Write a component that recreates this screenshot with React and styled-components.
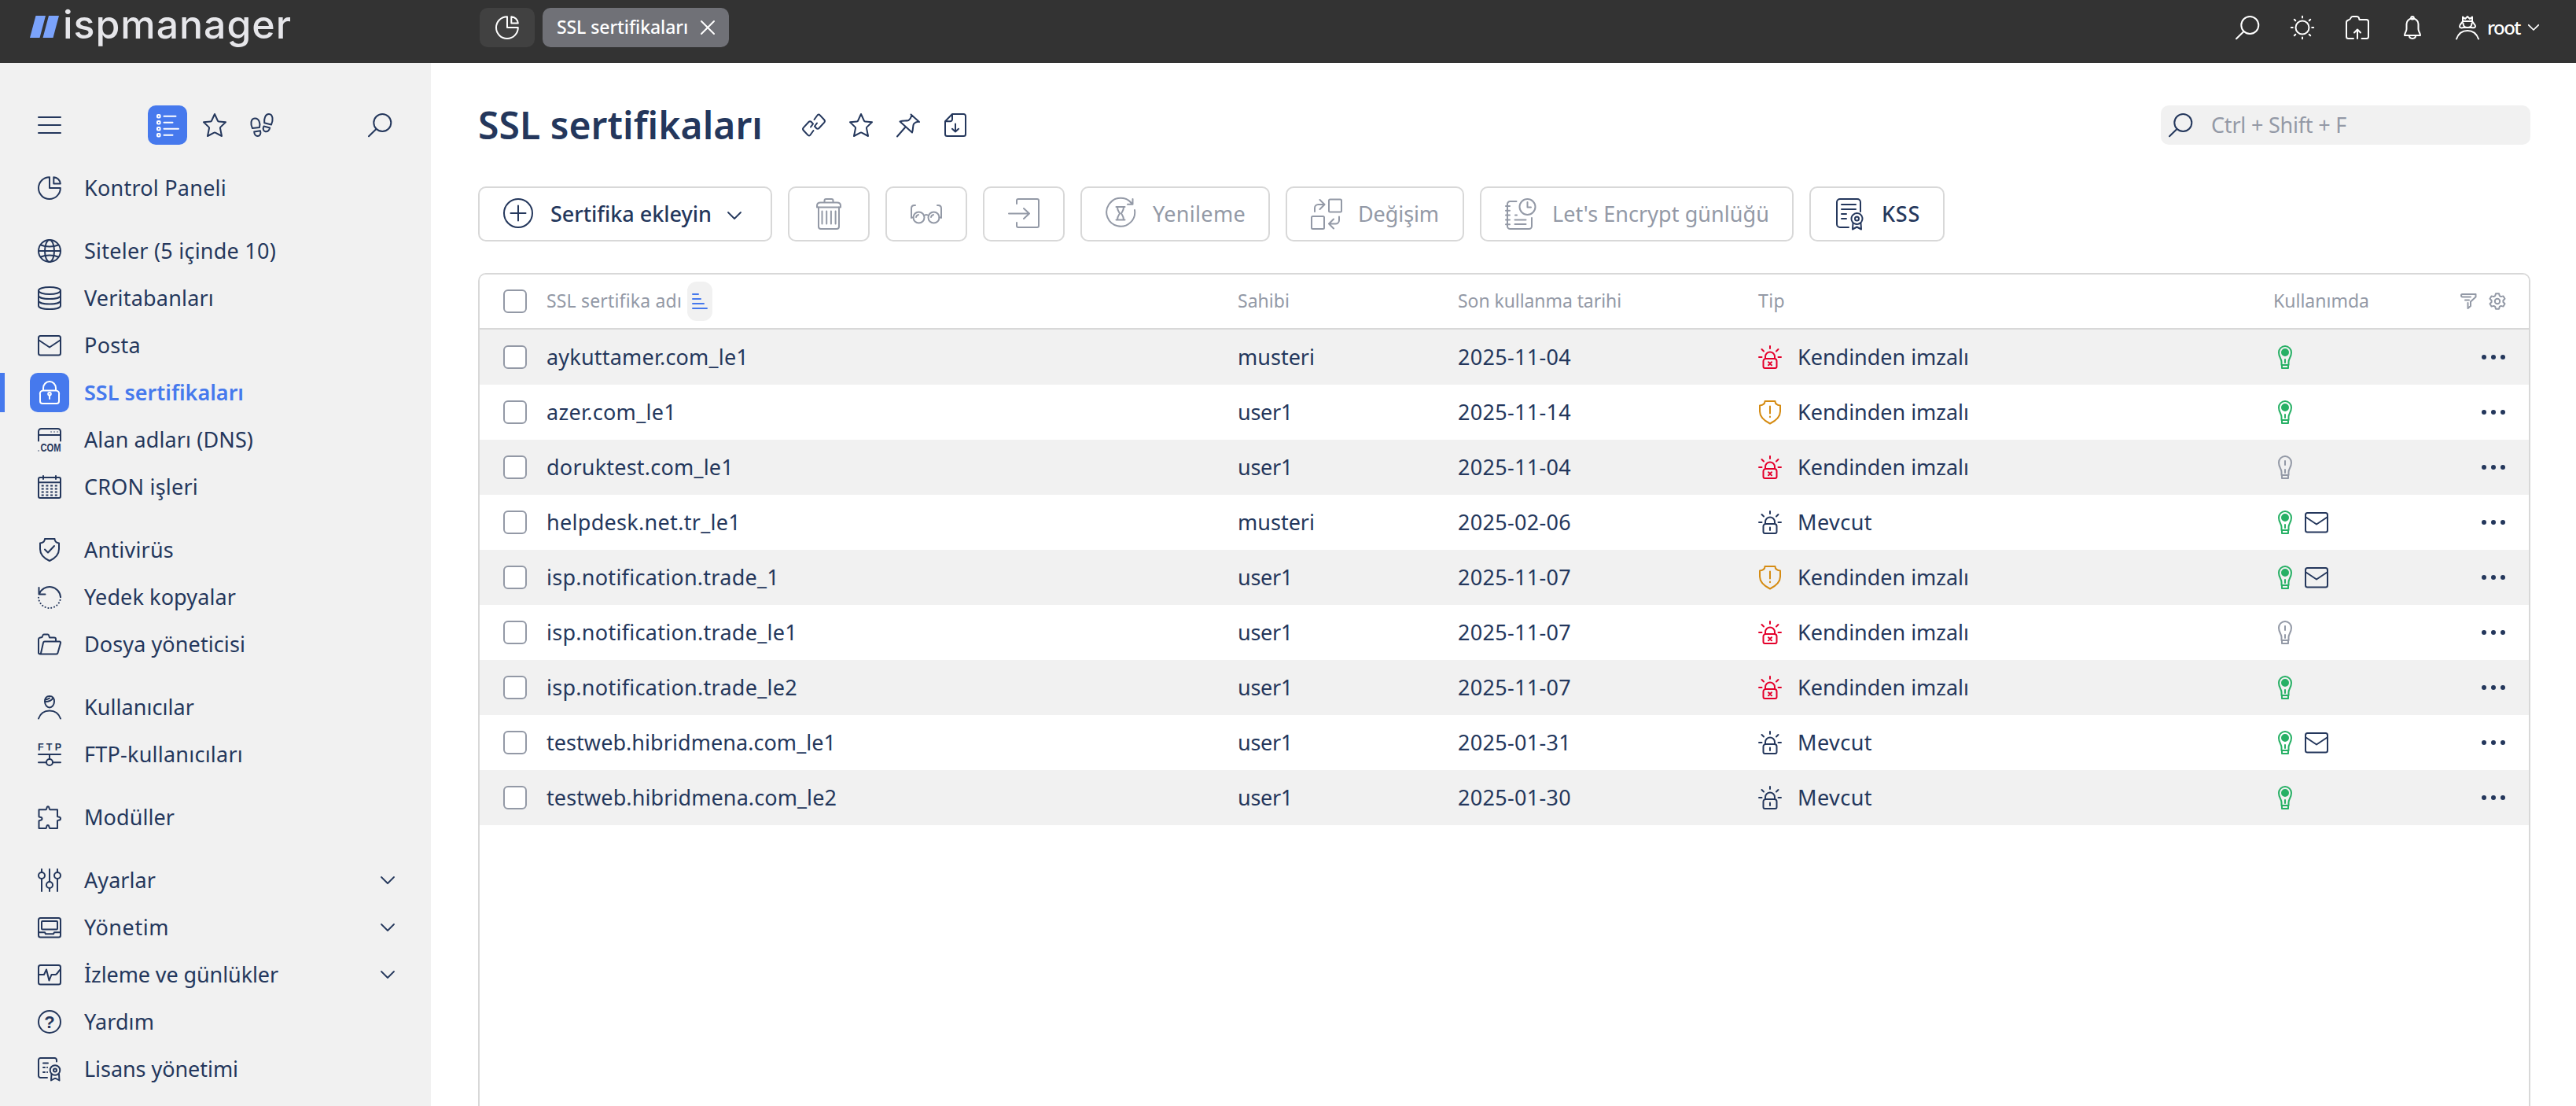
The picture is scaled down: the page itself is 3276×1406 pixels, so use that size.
import React, { useLayoutEffect, useRef, useState } from "react";
import styled, { createGlobalStyle, css } from "styled-components";

const c = {
  ink: "#24375c",
  muted: "#9399a6",
  line: "#d8d8d8",
  panel: "#f1f1f1",
  blue: "#4679ed",
  header: "#333333",
  green: "#27b065",
  red: "#e4002b",
  amber: "#d58b12",
};

const Global = createGlobalStyle`
  * { box-sizing: border-box; }
  html, body { margin: 0; height: 100%; overflow: hidden; }
  #root { height: 100%; }
  body { font-family: "Noto Sans", "Open Sans", sans-serif; color: ${c.ink}; background: #fff; }
`;

/* ---------- text that keeps a fixed measure ---------- */

const Line = styled.span`
  display: inline-block;
  flex: none;
  justify-self: start;
  white-space: nowrap;
  font-size: ${(p) => p.$size}px;
  font-weight: ${(p) => p.$weight};
  line-height: 1.2;
  color: ${(p) => p.$color || "inherit"};
  font-family: ${(p) => p.$family || "inherit"};
  letter-spacing: ${(p) => p.$spacing}px;
  margin-top: ${(p) => p.$lift || 0}px;
`;

function Text({ children, w, size = 27, weight = 400, color, family, lift = 0 }) {
  const ref = useRef(null);
  const [spacing, setSpacing] = useState(0);
  useLayoutEffect(() => {
    const natural = ref.current.getBoundingClientRect().width;
    setSpacing((w - natural) / children.length);
  }, []);
  return (
    <Line ref={ref} $size={size} $weight={weight} $color={color} $family={family} $spacing={spacing} $lift={lift}>
      {children}
    </Line>
  );
}

/* ---------- icons ---------- */

const Svg = styled.svg`
  display: block;
  flex: none;
  fill: none;
  stroke: ${(p) => p.$color || "currentColor"};
  stroke-width: ${(p) => p.$stroke || 2};
  stroke-linecap: round;
  stroke-linejoin: round;
  overflow: visible;
`;

const IconText = styled.text`
  font-family: "Liberation Sans", sans-serif;
  font-weight: 700;
  fill: currentColor;
  stroke: none;
`;

const glyphs = {
  menu: <path d="M1 5h28M1 15h28M1 25h28" />,
  list: (
    <g>
      <rect x="2" y="2" width="3.6" height="3.6" rx="1" /><rect x="2" y="10" width="3.6" height="3.6" rx="1" />
      <rect x="2" y="18" width="3.6" height="3.6" rx="1" /><rect x="2" y="26" width="3.6" height="3.6" rx="1" />
      <path d="M10.500 3.800h15M10.500 11.800h11M10.500 19.800h18.500M10.500 27.800h11" />
    </g>
  ),
  star: <path d="M15 1l3.900 8.500a1.500 1.500 0 0 0 1.200.9L29 11.300l-6.600 6.300a1.500 1.500 0 0 0-.4 1.400L24 29l-8.200-4.300a1.500 1.500 0 0 0-1.500 0L6 29l2-10a1.500 1.500 0 0 0-.4-1.400L1 11.300l8.900-.9a1.500 1.500 0 0 0 1.200-.9z" />,
  steps: (
    <g>
      <path d="M3 19C.5 14.500.5 7 6 6.500c5.500-.5 7.500 7 6 11.500z" />
      <path d="M5.200 23.500l7.800-1.200c1.300 4-.8 6.700-3.300 6.700-2.800 0-4.300-2.600-4.500-5.500z" />
      <path d="M27 14.500l-8.800-2.200C17.500 7 19.500.8 24 1c5.500.3 5.500 8.500 3 13.500z" />
      <path d="M25.200 18.500l-7.700-2c-1.500 3-.8 6 2 6.700 3 .8 5-1.700 5.700-4.700z" />
    </g>
  ),
  search: <g><circle cx="18.300" cy="12" r="11" /><path d="M10 20.500L1 29.300" /></g>,
  pie: <g><path d="M15 1.200V15h13.800A13.900 13.900 0 1 1 15 1.200z" /><path d="M20.300 1.200a9 9 0 0 1 8.500 8.300h-8.500z" /></g>,
  globe: (
    <g>
      <circle cx="15" cy="15" r="14" /><ellipse cx="15" cy="15" rx="6" ry="14" />
      <path d="M1 15h28M4 7.500c6 2.600 16 2.600 22 0M4 22.500c6-2.600 16-2.600 22 0" />
    </g>
  ),
  db: (
    <g>
      <ellipse cx="15" cy="5.500" rx="14" ry="4.500" />
      <path d="M1 5.500v19c0 6 28 6 28 0v-19M1 11.500c0 6 28 6 28 0M1 18c0 6 28 6 28 0" />
    </g>
  ),
  mail: <g><rect x="1" y="3" width="28" height="24.500" rx="2.500" /><path d="M1.500 8.500L15 17.500l13.500-9" /></g>,
  lock: (
    <g>
      <path d="M7 12V9.500a8 8.500 0 0 1 16 0V12" />
      <path d="M7 12.500h16a4 4 0 0 1 4 5V26a3 3 0 0 1-3 3H6a3 3 0 0 1-3-3v-8.500a4 4 0 0 1 4-5z" />
      <circle cx="15" cy="16.800" r="1.800" /><path d="M15 19v4" />
    </g>
  ),
  dns: (
    <g>
      <path d="M1 16.500V4.500A3.500 3.500 0 0 1 4.500 1h21A3.500 3.500 0 0 1 29 4.500v12M1 9h28" />
      <path d="M17 5h.1M21 5h.1M25 5h.1" opacity=".5" /><path d="M1 29h.1" opacity=".5" />
      <IconText x="3.500" y="30" fontSize="14" textLength="26" lengthAdjust="spacingAndGlyphs">COM</IconText>
    </g>
  ),
  calendar: (
    <g>
      <rect x="1" y="3" width="28" height="26" rx="2" /><path d="M1 9.300h28M7 1v4M23 1v4" />
      <path strokeLinecap="butt" strokeDasharray="3 2.700" d="M4.700 13.500h22M4.700 17.500h22M4.700 21.500h22M4.700 25.500h22" />
    </g>
  ),
  shield: <g><path d="M9 1h12.500c0 3.500 2.500 5 5.500 5.500V14c0 7-5.500 12-12 15C8.500 26 3 21 3 14V6.500C6.500 6 9 4.500 9 1z" /><path d="M9 14.500l4 4 8-8.500" /></g>,
  restore: <g><path d="M1.500 3v8.500H9.500M2 11A14 14 0 0 1 29 15" /><path strokeDasharray=".1 3.800" d="M29 15A14 14 0 0 1 1 15" /></g>,
  folder: <path d="M23 11.500V8.500a2 2 0 0 0-2-2h-6l-1-3a1.500 1.500 0 0 0-1.500-1H8A1.500 1.500 0 0 0 6.500 3.500l-1 2.500-3 .7A2 2 0 0 0 1 8.500V26a1.600 1.600 0 0 0 3 .5L7 13a2 2 0 0 1 2-1.500h18.500a1.500 1.500 0 0 1 1.500 2L25.500 26a2 2 0 0 1-2 1.500H2.800" />,
  user: <g><path d="M15 1c4 0 6.200 2.500 6 7-.2 4.500-3 7.500-6 7.500S9.200 12.500 9 8c-.2-4.500 2-7 6-7zM9.300 8c4.500 0 8-.7 10-4.500M9.500 5.500c2-.2 4-1 5.500-2" /><path d="M1 29.500C3.500 22.500 9 19.500 15 19.500s11.500 3 14 10" /></g>,
  ftp: (
    <g>
      <IconText x="0" y="9.500" fontSize="12.500" textLength="30" lengthAdjust="spacing">FTP</IconText>
      <path d="M1 15h28M15 15v5M1 25.200h9.500M19.500 25.200H29" /><circle cx="15" cy="25" r="4" />
    </g>
  ),
  puzzle: <path d="M1.500 5.200h9.200c.8 0 .3-4 2.300-4s1.500 4 2.300 4h9.700v8.800c0 1.200 4-.3 4 2.700s-4 1.500-4 2.700v9.700h-9.700c-1 0-.3-4-2.500-4s-1.300 4-2.300 4H1.500v-9.700c0-1 4 .3 4-2.700s-4-1.500-4-2.500z" />,
  sliders: <g><circle cx="5" cy="9" r="4" /><circle cx="15" cy="21" r="4" /><circle cx="25" cy="9" r="4" /><path d="M5 1v4M5 13v16M15 1v16M15 25v4M25 1v4M25 13v16" /></g>,
  monitor: <g><rect x="1" y="3" width="28" height="24.500" rx="2.500" /><rect x="5" y="7" width="20" height="10.500" rx="1" /><path d="M1 21.300h8l1 2h10l1-2h8" /></g>,
  pulse: <g><rect x="1" y="3" width="28" height="24.500" rx="2.500" /><path d="M1.500 15H8l3-6.500 3.500 14 3-7.500h5c2 0 4-5 6.500-7" /></g>,
  help: <g><circle cx="15" cy="15" r="14" /><IconText x="15" y="23" fontSize="22" textAnchor="middle">?</IconText></g>,
  license: (
    <g>
      <path d="M12 26H3.500A2.500 2.500 0 0 1 1 23.500v-20A2.500 2.500 0 0 1 3.500 1h18A2.500 2.500 0 0 1 24 3.500v2M7 7.500h6M7 13h2M7 19h2M12 13h.1M12 19h.1" />
      <circle cx="22" cy="16.500" r="6.300" /><circle cx="22" cy="16.500" r="2" /><path d="M17.500 21.500l-.5 8 4.500-2.500h1.500l4.500 2.500-.5-8" />
    </g>
  ),
  sun: <g><circle cx="15" cy="15" r="8.500" /><path d="M15 .8v1.600M15 27.600v1.600M.8 15h2M27.200 15h2M4.800 4.800l1.500 1.500M23.700 23.700l1.500 1.500M4.800 25.200l1.500-1.500M23.700 6.300l1.500-1.500" /></g>,
  upload: <g><path d="M10 29H3.500A2.500 2.500 0 0 1 1 26.500v-18C1 7 2 6 3.500 5.500 5.500 5 6 4.500 6.500 3 7 1.500 7.500 1 9 1h5c1.500 0 2.500.5 3 2l.5 2h9A2.500 2.500 0 0 1 29 7.500v19a2.500 2.500 0 0 1-2.500 2.500H20.500" /><path d="M15 29V18M11 21.500l4-4 4 4" /></g>,
  bell: <g><path d="M7.500 10.500a7.500 7 0 0 1 15 0V17c0 3 2.500 5 2.500 8H5c0-3 2.500-5 2.500-8z" /><circle cx="15" cy="2.800" r="1.800" /><path d="M11 25.500c0 4.500 8 4.500 8 0" /></g>,
  root: <g><path d="M9 7V1.500l3 2.500 3-3 3 3 3-2.500V7zM9 7c-1.500 3-4 4-4 6.500S8 15.500 10 15h10c2 .5 5 .5 5-1.500S22.500 10 21 7M9.500 9.500c0 4 2.500 5.500 5.500 5.500s5.500-1.500 5.500-5.500" /><path d="M1 29.500C3.500 22.500 9 19 15 19s11.500 3.500 14 10.500" /></g>,
  link: (
    <g>
      <path d="M14.500 22l-4 5.500c-.8 1.200-2.200 1.300-3.200.2l-5.500-6c-1-1.100-1-2.200-.1-3.300L8.500 11c1-1.100 2.300-1.100 3.300 0l2.200 2.500-3 4" />
      <path d="M15.500 8l4-5.500c.8-1.200 2.200-1.300 3.200-.2l5.500 6c1 1.100 1 2.200.1 3.300L21.500 19c-1 1.100-2.300 1.100-3.300 0L16 16.500l3-4" />
    </g>
  ),
  pin: <path d="M1 29.500l10.500-12M18.500 1.500L29 11M19.500 2.500c-1 3.500-2 5-4 6.500-3.500 1-7 0-11 1.500l15.500 14c1.500-4 .5-7.500 2-11 1.500-2 3-2.500 6-3" />,
  file: <g><path d="M11 1h14.500A2.500 2.500 0 0 1 28 3.500v23a2.500 2.500 0 0 1-2.500 2.500H4.500A2.500 2.500 0 0 1 2 26.500V10.300zM11 1v6.800A2.500 2.500 0 0 1 8.500 10.300H2" /><path d="M15 13.500v10M11 19.800l4 3.700 4-3.700" /></g>,
  plus: <g><circle cx="19" cy="19" r="18" /><path d="M19 9.500v19M9.500 19h19" /></g>,
  trash: (
    <g>
      <path d="M5 11.500V9.500C5 7 7 5.500 9.500 5.500h21C33 5.500 35 7 35 9.500v2zM14.500 5.500V3a2 2 0 0 1 2-2h7a2 2 0 0 1 2 2v2.500" />
      <path d="M7 11.500V36a3 3 0 0 0 3 3h20a3 3 0 0 0 3-3V11.500M11.500 16.500v16M17.200 16.500v16M22.900 16.500v16M28.600 16.500v16" />
    </g>
  ),
  glasses: <g><circle cx="10.500" cy="24.500" r="7" /><circle cx="29.500" cy="24.500" r="7" /><path d="M17.500 22c1-1.500 4-1.500 5 0M1 25V13c0-2.500 1.500-4 4-4h1M39 25V13c0-2.500-1.500-4-4-4h-1M7 24a4 4 0 0 1 3-3M26 24a4 4 0 0 1 3-3M1 24.500h2.500M36.500 24.500H39" /></g>,
  enter: <path d="M11 7V3a2 2 0 0 1 2-2h24a2 2 0 0 1 2 2v32a2 2 0 0 1-2 2H13a2 2 0 0 1-2-2v-4M1 19.500h26M20 13l7 6.500-7 6.500" />,
  renew: <g><path d="M34 7.500A18 18 0 1 0 37 15M34.500 1v6.700H28" /><path d="M13.500 11h11M13.500 27.500h11M15 11c0 5 2 6 3 8.300-1 2.200-3 3.200-3 8.200M23 11c0 5-2 6-3 8.300 1 2.200 3 3.200 3 8.200" /></g>,
  swap: <g><rect x="23" y="1.500" width="16" height="16" rx="1.500" /><rect x="1" y="23" width="16" height="16" rx="1.500" /><path d="M5 17v-4.500A4.500 4.500 0 0 1 9.500 8H17M11.500 2L17.500 8l-6 6M36 23.500V28a4.500 4.500 0 0 1-4.500 4.500H23M29 26.500l-6 6 6 6" /></g>,
  journal: (
    <g>
      <path d="M14.500 4H6.500A3.500 3.500 0 0 0 3 7.500v28A3.500 3.500 0 0 0 6.500 39h24a3.500 3.500 0 0 0 3.500-3.500V25M1 10h5M1 15.800h5M1 21.600h5M1 27.400h5M1 33.200h5M12.500 27.500h14M12.500 33h14M13 21.500h2" />
      <circle cx="28.500" cy="11" r="10" /><path d="M28.500 5v6.500H33" />
    </g>
  ),
  cert: (
    <g>
      <path d="M18 37H7a4 4 0 0 1-4-4V5a4 4 0 0 1 4-4h22a4 4 0 0 1 4 4v12M9 8h18M9 14h18M9 20h6M9 26h6" />
      <circle cx="28.500" cy="26" r="7" strokeDasharray="4 1.200" /><circle cx="28.500" cy="26" r="2.500" /><path d="M23.500 32l-.5 7.500 5.500-3 5.500 3-.5-7.500" />
    </g>
  ),
  alarm: (
    <g>
      <path d="M15 1v3M4.500 5l2.500 2.500M25.500 5L23 7.500M1 15h3.500M25.500 15H29" />
      <path d="M9 17v-2.500a6 6 0 0 1 12 0V17M9.500 17h11a3 3 0 0 1 3 3v7a2 2 0 0 1-2 2h-13a2 2 0 0 1-2-2v-7a3 3 0 0 1 3-3z" />
    </g>
  ),
  warn: <g><path d="M8.500 1h13c0 3 2 5 6.500 5.500V14c0 7-6 12-13 15.500C8 26 2 21 2 14V6.500C6.500 6 8.500 4 8.500 1z" /><path d="M15 7.500v9M15 20.500v.8" /></g>,
  bulb: <path d="M11 29h8M10.500 25h9M11 25v4M19 25v4M10.500 25v-4c0-4-3.500-6-3.500-12a8 8 0 0 1 16 0c0 6-3.500 8-3.500 12v4M15 18v4" />,
  filter: <path d="M2 4.500a1.500 1.500 0 0 1-.5-3.500h17v3.500L12 10.500v5.500l-3.500 3v-7M2 4.500h10M5 8.500h5" />,
  gear: <g><path d="M8 1.200h4l.8 2.900 1.800 1 2.900-.7 2 3.400-2.100 2.200v2l2.100 2.200-2 3.400-2.900-.7-1.800 1-.8 2.900H8l-.8-2.900-1.800-1-2.900.7-2-3.400L2.600 12v-2L.5 7.800l2-3.400 2.900.7 1.800-1z" /><circle cx="10" cy="11" r="3.200" /></g>,
  close: <path d="M1 1l16 16M17 1L1 17" />,
  down: <path d="M1 1l8 8 8-8" />,
};

function Icon({ name, box = 30, h, stroke, color, width, children }) {
  const bh = h || box;
  const w = width || box;
  return (
    <Svg viewBox={`0 0 ${box} ${bh}`} width={w} height={(w * bh) / box} $stroke={stroke} $color={color}>
      {glyphs[name]}
      {children}
    </Svg>
  );
}

/* ---------- header ---------- */

const Page = styled.div`
  display: grid;
  grid-template: 80px 1fr / 548px 1fr;
  width: 3276px;
  height: 1406px;
  overflow: hidden;
`;

const Header = styled.header`
  grid-column: 1 / -1;
  display: flex;
  padding: 10px 47px 20px 38px;
  background: ${c.header};
  color: #fff;
`;

const Logo = styled.div`
  display: flex;
  align-items: center;
  width: 572px;
  height: 50px;
  color: #e6e6ea;
`;

const LogoMark = styled.svg`
  display: block;
  width: 37px;
  height: 28px;
  margin: -2px 5px 0 0;
`;

const Tab = styled.div`
  display: flex;
  align-items: center;
  justify-content: center;
  gap: 16px;
  width: ${(p) => p.$w}px;
  height: 50px;
  margin-right: 10px;
  border-radius: 10px;
  background: ${(p) => (p.$active ? "#707177" : "#414141")};
`;

const HeaderTools = styled.div`
  display: flex;
  align-items: center;
  gap: 40px;
  height: 50px;
  margin-left: auto;
`;

const Account = styled.div`
  display: flex;
  align-items: center;
  gap: 10px;
`;

/* ---------- sidebar ---------- */

const Sidebar = styled.aside`
  padding-top: 54px;
  background: ${c.panel};
`;

const SideTools = styled.div`
  display: flex;
  align-items: center;
  height: 50px;
  padding: 0 50px 0 48px;
`;

const SideModes = styled.div`
  display: flex;
  align-items: center;
  gap: 30px;
  margin: 0 auto 0 110px;
`;

const Tile = styled.span`
  display: flex;
  flex: none;
  align-items: center;
  justify-content: center;
  width: 50px;
  height: 50px;
  border-radius: 10px;
  ${(p) => p.$on && css`background: ${c.blue}; color: #fff;`}
`;

const ModeTile = styled(Tile)`
  margin-right: -10px;
`;

const Nav = styled.nav`
  display: flex;
  flex-direction: column;
  gap: 30px;
  padding-top: 30px;
`;

const NavGroup = styled.ul`
  display: flex;
  flex-direction: column;
  gap: 10px;
  margin: 0;
  padding: 0;
  list-style: none;
`;

const NavItem = styled.li`
  display: flex;
  align-items: center;
  gap: 19px;
  height: 50px;
  padding: 0 46px 0 ${(p) => (p.$on ? 32 : 38)}px;
  border-left: ${(p) => (p.$on ? `6px solid ${c.blue}` : "0")};
  color: ${(p) => (p.$on ? c.blue : c.ink)};
`;

const Push = styled.span`
  margin-left: auto;
`;

/* ---------- content ---------- */

const Main = styled.main`
  display: flex;
  flex-direction: column;
  min-width: 0;
  padding: 54px 58px 0 60px;
`;

const TitleRow = styled.div`
  display: flex;
  align-items: center;
  height: 50px;
`;

const TitleTools = styled.div`
  display: flex;
  gap: 30px;
  margin-left: 50px;
`;

const SearchBox = styled.div`
  display: flex;
  align-items: center;
  gap: 24px;
  width: 470px;
  height: 50px;
  margin-left: auto;
  padding-left: 10px;
  border-radius: 10px;
  background: ${c.panel};
`;

const Toolbar = styled.div`
  display: flex;
  gap: 20px;
  margin-top: 53px;
`;

const Button = styled.button`
  display: flex;
  align-items: center;
  gap: 20px;
  width: ${(p) => p.$w}px;
  height: 70px;
  padding: 0 0 0 30px;
  border: 2px solid ${c.line};
  border-radius: 10px;
  background: #fff;
  font-family: inherit;
  color: ${(p) => (p.$off ? c.muted : c.ink)};
`;

const Table = styled.section`
  flex: 1;
  margin-top: 40px;
  border: 2px solid ${c.line};
  border-bottom: 0;
  border-radius: 10px 10px 0 0;
  overflow: hidden;
`;

const Row = styled.div`
  display: grid;
  grid-template-columns: 55px 879px 280px 382px 655px 1fr;
  align-items: center;
  height: 70px;
  padding: 0 30px;
  background: ${(p) => (p.$shade ? c.panel : "#fff")};
`;

const HeadRow = styled(Row)`
  border-bottom: 2px solid ${c.line};
  color: ${c.muted};
`;

const Cell = styled.div`
  display: flex;
  align-items: center;
  gap: ${(p) => p.$gap || 0}px;
`;

const UsageCell = styled(Cell)`
  justify-content: space-between;
`;

const Check = styled.span`
  width: 30px;
  height: 30px;
  border: 2px solid ${c.muted};
  border-radius: 6px;
  background: #fff;
`;

const SortBadge = styled.span`
  display: flex;
  align-items: center;
  justify-content: center;
  width: 32px;
  height: 50px;
  border-radius: 12px;
  background: ${c.panel};
`;

/* ---------- data ---------- */

const nav = [
  [["pie", "Kontrol Paneli", 181]],
  [
    ["globe", "Siteler (5 içinde 10)", 244],
    ["db", "Veritabanları", 165],
    ["mail", "Posta", 72],
    ["lock", "SSL sertifikaları", 203, "on"],
    ["dns", "Alan adları (DNS)", 215],
    ["calendar", "CRON işleri", 145],
  ],
  [
    ["shield", "Antivirüs", 114],
    ["restore", "Yedek kopyalar", 193],
    ["folder", "Dosya yöneticisi", 205],
  ],
  [
    ["user", "Kullanıcılar", 140],
    ["ftp", "FTP-kullanıcıları", 202],
  ],
  [["puzzle", "Modüller", 115]],
  [
    ["sliders", "Ayarlar", 91, "more"],
    ["monitor", "Yönetim", 108, "more"],
    ["pulse", "İzleme ve günlükler", 247, "more"],
    ["help", "Yardım", 89],
    ["license", "Lisans yönetimi", 196],
  ],
];

const rows = [
  ["aykuttamer.com_le1", 257, "musteri", "2025-11-04", "bad", true, false],
  ["azer.com_le1", 165, "user1", "2025-11-14", "warn", true, false],
  ["doruktest.com_le1", 238, "user1", "2025-11-04", "bad", false, false],
  ["helpdesk.net.tr_le1", 247, "musteri", "2025-02-06", "ok", true, true],
  ["isp.notification.trade_1", 296, "user1", "2025-11-07", "warn", true, true],
  ["isp.notification.trade_le1", 319, "user1", "2025-11-07", "bad", false, false],
  ["isp.notification.trade_le2", 319, "user1", "2025-11-07", "bad", true, false],
  ["testweb.hibridmena.com_le1", 368, "user1", "2025-01-31", "ok", true, true],
  ["testweb.hibridmena.com_le2", 369, "user1", "2025-01-30", "ok", true, false],
];

function TypeIcon({ kind }) {
  if (kind === "warn") return <Icon name="warn" color={c.amber} />;
  return (
    <Icon name="alarm" color={kind === "bad" ? c.red : c.ink}>
      {kind === "bad" ? <path d="M13 21.200l4 4M17 21.200l-4 4" /> : <path d="M15 21.500v3.500" />}
    </Icon>
  );
}

export default function App() {
  return (
    <Page>
      <Global />
      <Header>
        <Logo>
          <LogoMark viewBox="0 0 37 28">
            <path d="M7.500 0H20L12.500 28H0zM24 0h13l-7.500 28H16.500z" fill="#7ba3fb" />
          </LogoMark>
          <Text w={291} size={50} weight={500} family='"Inter", sans-serif' lift={-8}>ispmanager</Text>
        </Logo>
        <Tab $w={70}><Icon name="pie" /></Tab>
        <Tab $w={237} $active>
          <Text w={167} size={23} weight={500}>SSL sertifikaları</Text>
          <Icon name="close" box={18} />
        </Tab>
        <HeaderTools>
          <Icon name="search" />
          <Icon name="sun" />
          <Icon name="upload" />
          <Icon name="bell" />
          <Account>
            <Icon name="root" />
            <Text w={42} size={24} weight={500}>root</Text>
            <Icon name="down" box={18} h={10} width={14} stroke={2.2} />
          </Account>
        </HeaderTools>
      </Header>

      <Sidebar>
        <SideTools>
          <Icon name="menu" />
          <SideModes>
            <ModeTile $on><Icon name="list" /></ModeTile>
            <Icon name="star" />
            <Icon name="steps" />
          </SideModes>
          <Icon name="search" />
        </SideTools>
        <Nav>
          {nav.map((group, i) => (
            <NavGroup key={i}>
              {group.map(([icon, label, w, flag]) => (
                <NavItem key={label} $on={flag === "on"}>
                  <Tile $on={flag === "on"}><Icon name={icon} /></Tile>
                  <Text w={w} weight={flag === "on" ? 600 : 400}>{label}</Text>
                  {flag === "more" && <Push><Icon name="down" box={18} h={10} stroke={1.8} /></Push>}
                </NavItem>
              ))}
            </NavGroup>
          ))}
        </Nav>
      </Sidebar>

      <Main>
        <TitleRow>
          <Text w={362} size={48} weight={600}>SSL sertifikaları</Text>
          <TitleTools>
            <Icon name="link" />
            <Icon name="star" />
            <Icon name="pin" />
            <Icon name="file" />
          </TitleTools>
          <SearchBox>
            <Icon name="search" />
            <Text w={172} color={c.muted}>Ctrl + Shift + F</Text>
          </SearchBox>
        </TitleRow>

        <Toolbar>
          <Button $w={374}>
            <Icon name="plus" box={40} />
            <Text w={205} weight={500}>Sertifika ekleyin</Text>
            <Icon name="down" box={18} h={7} stroke={1.8} />
          </Button>
          <Button $w={104} $off><Icon name="trash" box={40} /></Button>
          <Button $w={104} $off><Icon name="glasses" box={40} /></Button>
          <Button $w={104} $off><Icon name="enter" box={40} /></Button>
          <Button $w={241} $off><Icon name="renew" box={40} /><Text w={118}>Yenileme</Text></Button>
          <Button $w={227} $off><Icon name="swap" box={40} /><Text w={103}>Değişim</Text></Button>
          <Button $w={399} $off><Icon name="journal" box={40} /><Text w={276}>Let's Encrypt günlüğü</Text></Button>
          <Button $w={172}><Icon name="cert" box={40} /><Text w={49} weight={500}>KSS</Text></Button>
        </Toolbar>

        <Table>
          <HeadRow>
            <Check />
            <Cell $gap={7}>
              <Text w={172} size={23}>SSL sertifika adı</Text>
              <SortBadge>
                <Svg viewBox="0 0 20 20" width="20" height="20" $color={c.blue}>
                  <path d="M1 1h7M1 7h10M1 13h14M1 19h18" />
                </Svg>
              </SortBadge>
            </Cell>
            <Text w={66} size={23}>Sahibi</Text>
            <Text w={208} size={23}>Son kullanma tarihi</Text>
            <Text w={34} size={23}>Tip</Text>
            <UsageCell>
              <Text w={122} size={23}>Kullanımda</Text>
              <Cell $gap={16}>
                <Icon name="filter" box={20} />
                <Icon name="gear" box={20} h={22} />
              </Cell>
            </UsageCell>
          </HeadRow>
          {rows.map(([name, w, owner, date, kind, used, mail], i) => (
            <Row key={name} $shade={i % 2 === 0}>
              <Check />
              <Text w={w}>{name}</Text>
              <Text w={owner === "user1" ? 70 : 98}>{owner}</Text>
              <Text w={144}>{date}</Text>
              <Cell $gap={20}>
                <TypeIcon kind={kind} />
                {kind === "ok" ? <Text w={95}>Mevcut</Text> : <Text w={218}>Kendinden imzalı</Text>}
              </Cell>
              <UsageCell>
                <Cell $gap={10}>
                  <Icon name="bulb" color={used ? c.green : c.muted}>
                    {used ? <circle cx="15" cy="9" r="4" fill={c.green} /> : <path d="M15 7v5" />}
                  </Icon>
                  {mail && <Icon name="mail" />}
                </Cell>
                <Svg viewBox="0 0 30 6" width="30" height="6">
                  <g fill={c.ink} stroke="none"><circle cx="3" cy="3" r="3" /><circle cx="15" cy="3" r="3" /><circle cx="27" cy="3" r="3" /></g>
                </Svg>
              </UsageCell>
            </Row>
          ))}
        </Table>
      </Main>
    </Page>
  );
}
